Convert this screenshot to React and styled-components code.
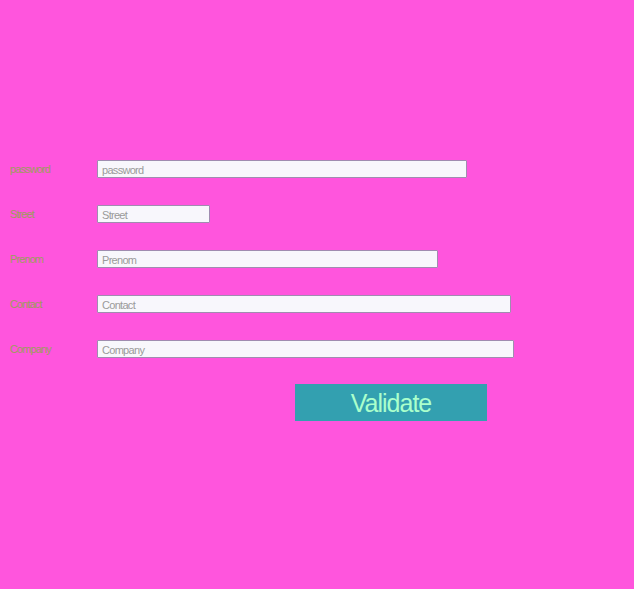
import React from 'react';
import styled, { createGlobalStyle } from 'styled-components';

const fields = [
  { name: 'password', width: 370 },
  { name: 'Street', width: 113 },
  { name: 'Prenom', width: 341 },
  { name: 'Contact', width: 414 },
  { name: 'Company', width: 417 },
];

const GlobalStyle = createGlobalStyle`
  html, body {
    margin: 0;
    padding: 0;
    background: #ff55dd;
  }
  body {
    font-family: 'Liberation Sans', Arial, sans-serif;
  }
`;

const Page = styled.div`
  min-height: 589px;
  background: #ff55dd;
  padding: 160px 0 0 10px;
  box-sizing: border-box;
`;

const Form = styled.form`
  display: flex;
  flex-direction: column;
  gap: 27px;
`;

const Row = styled.div`
  display: grid;
  grid-template-columns: 87px auto;
  align-items: center;
  height: 18px;
`;

const Label = styled.label`
  font-family: 'Liberation Sans', Arial, sans-serif;
  font-size: 11px;
  letter-spacing: -0.9px;
  color: #9c9c5c;
`;

const Input = styled.input`
  width: ${p => p.$width}px;
  height: 18px;
  box-sizing: border-box;
  margin: 0;
  padding: 1px 4px 0;
  border: 1px solid #a08cb0;
  border-radius: 1px;
  background: #f8f7fc;
  font-family: 'Liberation Sans', Arial, sans-serif;
  font-size: 11px;
  letter-spacing: -0.7px;
  color: #555;
  outline: none;

  &::placeholder {
    color: #9a9a9a;
  }
`;

const ButtonRow = styled.div`
  display: flex;
  padding: 0 0 0 285px;
  margin-top: -1px;
`;

const Validate = styled.button`
  width: 192px;
  height: 37px;
  border: none;
  margin: 0;
  padding: 2px 0 0;
  background: #33a0b0;
  color: #aaffcc;
  font-family: 'Liberation Sans', Arial, sans-serif;
  font-size: 25px;
  letter-spacing: -1px;
  cursor: pointer;
`;

export default function App() {
  return (
    <Page>
      <GlobalStyle />
      <Form onSubmit={e => e.preventDefault()}>
        {fields.map(f => (
          <Row key={f.name}>
            <Label htmlFor={f.name}>{f.name}</Label>
            <Input id={f.name} $width={f.width} placeholder={f.name} />
          </Row>
        ))}
        <ButtonRow>
          <Validate type="submit">Validate</Validate>
        </ButtonRow>
      </Form>
    </Page>
  );
}
